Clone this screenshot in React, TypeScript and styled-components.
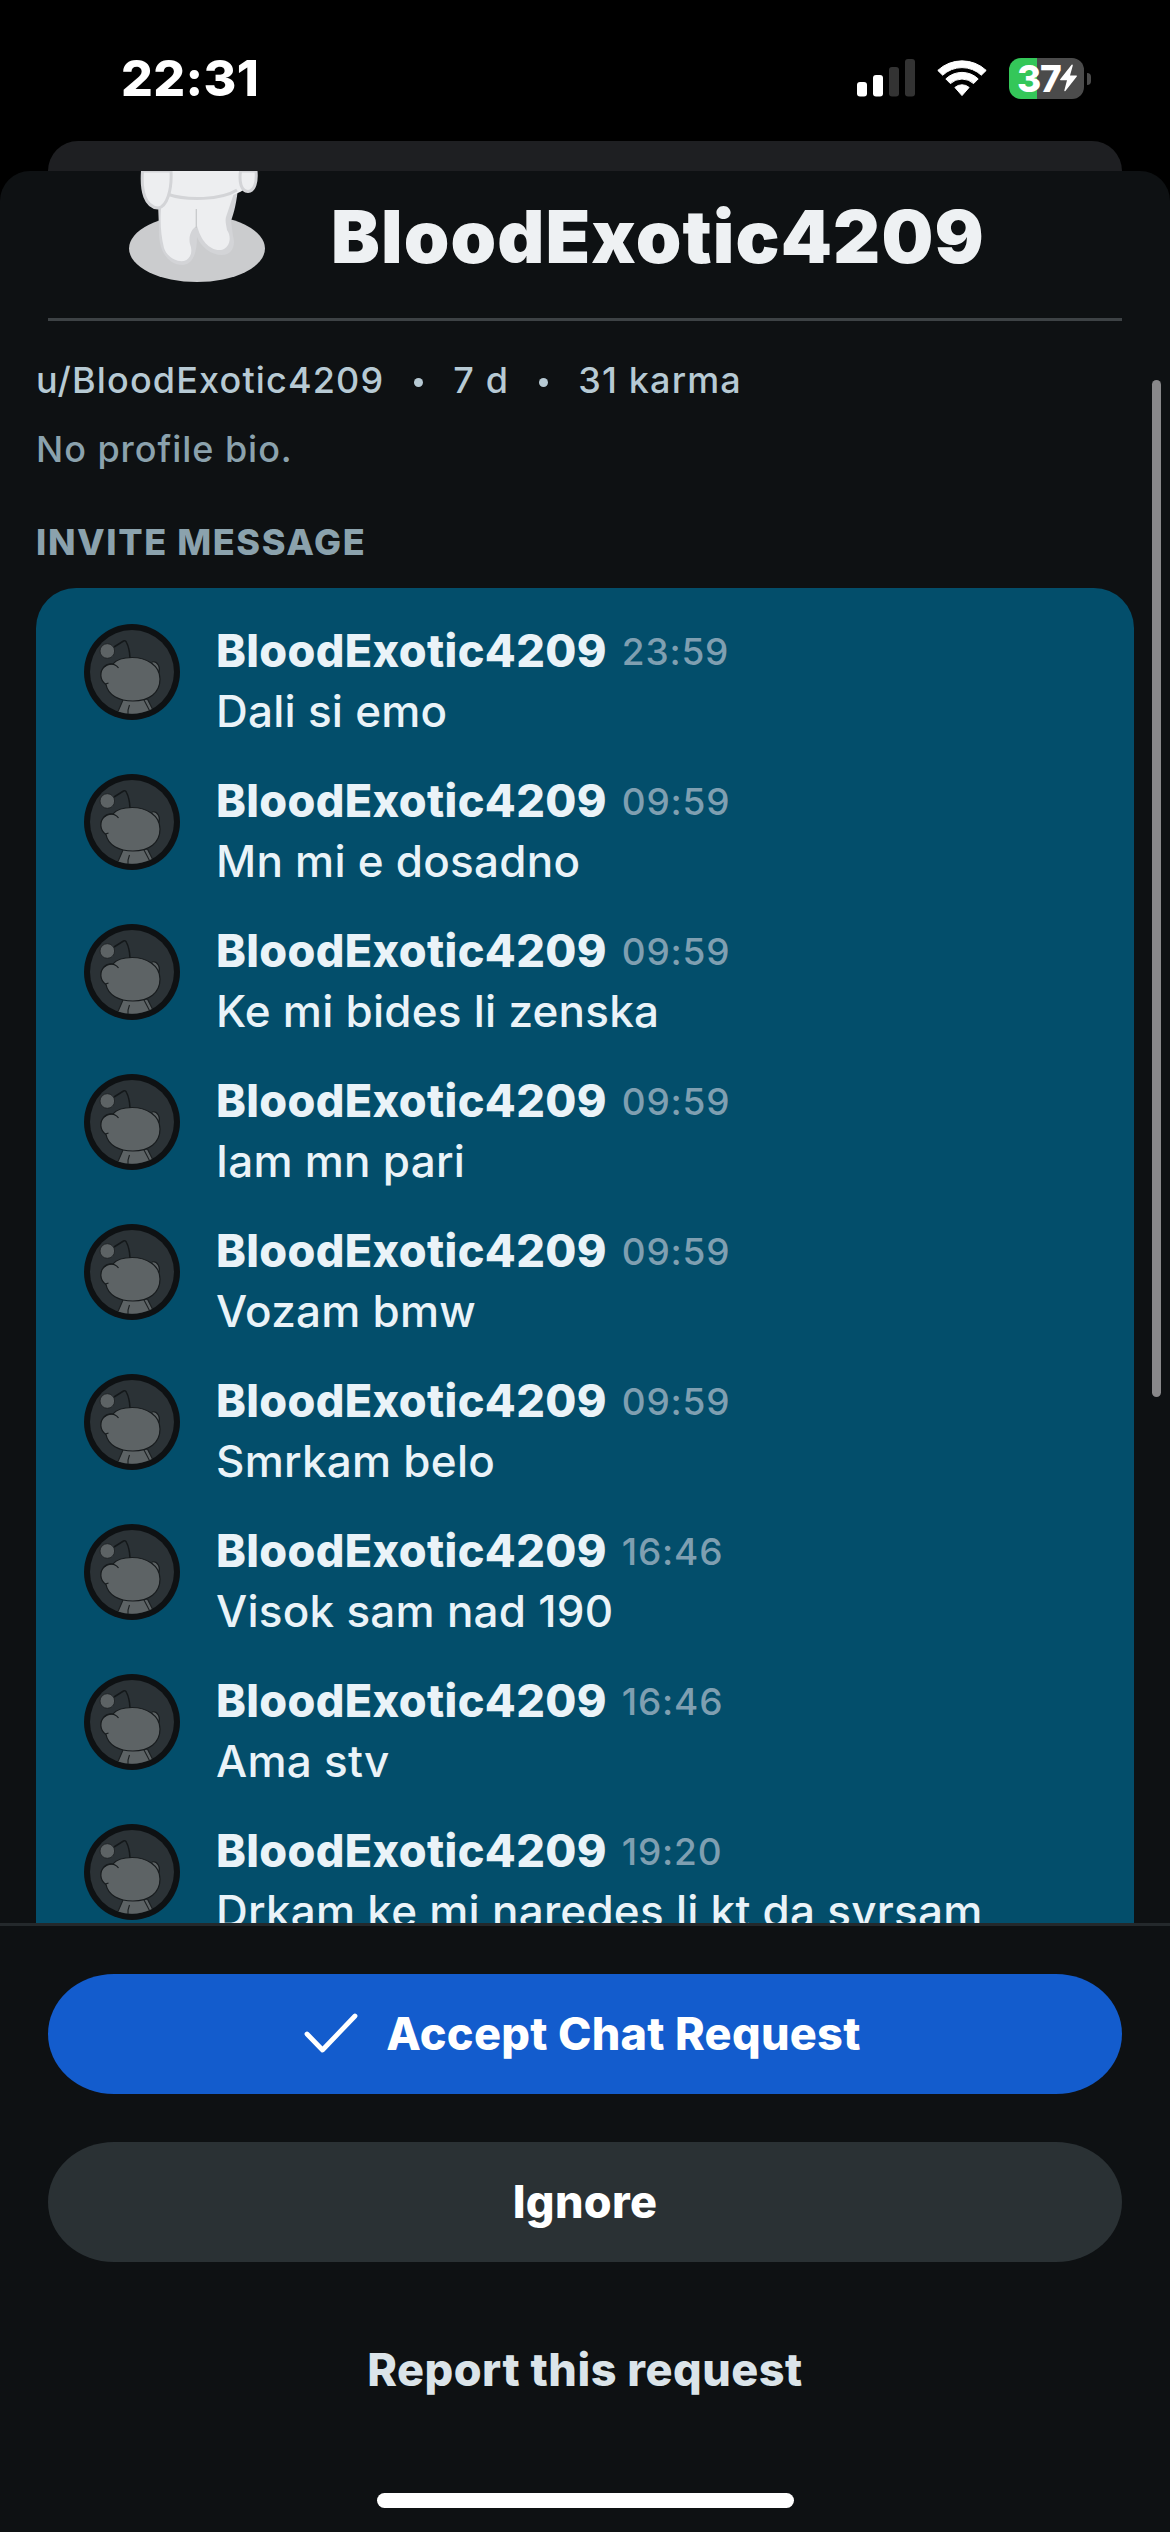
import React from "react";
import styled, { createGlobalStyle, css } from "styled-components";

const GlobalStyle = createGlobalStyle`
  *, *::before, *::after { box-sizing: border-box; }
  html, body { margin: 0; padding: 0; background: #000; }
  body { font-family: Inter, "Liberation Sans", sans-serif; -webkit-font-smoothing: antialiased; }
`;

const Screen = styled.div`
  width: 1170px;
  height: 2532px;
  display: flex;
  flex-direction: column;
  overflow: hidden;
  background: #000;
`;

const StatusBar = styled.div`
  height: 141px;
  flex: none;
  display: flex;
  align-items: flex-start;
  justify-content: space-between;
  padding: 48px 78px 0 121px;
`;

const Clock = styled.div`
  font-size: 50px;
  line-height: 60px;
  font-weight: 800;
  letter-spacing: 0.4px;
  color: #fff;
`;

const StatusIcons = styled.div`
  display: flex;
  align-items: center;
  height: 60px;
  gap: 22px;
`;

const BackSheet = styled.div`
  height: 30px;
  flex: none;
  margin: 0 48px;
  border-radius: 30px 30px 0 0;
  background: #1e1f22;
`;

const Sheet = styled.main`
  position: relative;
  flex: 1;
  display: flex;
  flex-direction: column;
  min-height: 0;
  border-radius: 30px 30px 0 0;
  background: #0e1113;
  overflow: hidden;
`;

const Header = styled.header`
  flex: none;
  height: 150px;
  margin: 0 48px;
  padding-left: 81px;
  display: flex;
  align-items: flex-start;
  border-bottom: 3px solid #3d4245;
`;

const Title = styled.h1`
  margin: 22px 0 0 66px;
  font-size: 73px;
  line-height: 87px;
  font-weight: 900;
  letter-spacing: 1.15px;
  color: #eef1f3;
`;

const Content = styled.section`
  flex: 1;
  min-height: 0;
  overflow: hidden;
  padding: 37px 36px 0;
`;

const Meta = styled.div`
  display: flex;
  align-items: center;
  height: 44px;
  font-size: 36px;
  line-height: 44px;
  font-weight: 500;
  letter-spacing: 1.15px;
  color: #b7cad4;
`;

const Dot = styled.i`
  width: 9px;
  height: 9px;
  margin: 4px 30px 0;
  border-radius: 50%;
  background: #b7cad4;
`;

const Bio = styled.p`
  margin: 25px 0 0;
  font-size: 36px;
  line-height: 44px;
  font-weight: 500;
  letter-spacing: 0.95px;
  color: #8ba2ad;
`;

const SectionLabel = styled.h2`
  margin: 49px 0 24px;
  font-size: 36px;
  line-height: 44px;
  font-weight: 800;
  letter-spacing: 1.6px;
  color: #8ba2ad;
`;

const Card = styled.div`
  display: flex;
  flex-direction: column;
  gap: 54px;
  padding: 36px 48px 60px;
  border-radius: 40px;
  background: #034e6b;
`;

const MessageRow = styled.article`
  display: flex;
  gap: 36px;
  height: 96px;
`;

const MessageBody = styled.div`
  margin-top: -3px;
  white-space: nowrap;
`;

const MessageHead = styled.div`
  display: flex;
  align-items: center;
  gap: 15px;
  height: 60px;
`;

const Author = styled.span`
  font-size: 45px;
  line-height: 60px;
  font-weight: 800;
  letter-spacing: 0.35px;
  color: #eaf3f8;
`;

const Time = styled.time`
  padding-top: 1px;
  font-size: 37px;
  line-height: 44px;
  font-weight: 500;
  letter-spacing: 0.8px;
  color: #7f9fb1;
`;

const MessageText = styled.p`
  margin: 0;
  font-size: 44px;
  line-height: 60px;
  font-weight: 500;
  letter-spacing: 0.25px;
  color: #eaf3f8;
`;

const ScrollThumb = styled.div`
  position: absolute;
  top: 209px;
  right: 9px;
  width: 9px;
  height: 1017px;
  border-radius: 5px;
  background: #88888a;
`;

const Footer = styled.footer`
  flex: none;
  height: 609px;
  display: flex;
  flex-direction: column;
  align-items: center;
  gap: 48px;
  padding: 48px 48px 0;
  border-top: 3px solid #24292c;
`;

const Button = styled.button<{ $tone: "primary" | "secondary" | "plain" }>`
  width: 100%;
  height: 120px;
  flex: none;
  display: flex;
  align-items: center;
  justify-content: center;
  gap: 28px;
  padding: 0;
  border: 0;
  border-radius: 66px / 60px;
  font: 800 45px/60px Inter, "Liberation Sans", sans-serif;
  letter-spacing: 0.3px;
  ${({ $tone }) =>
    $tone === "primary"
      ? css`padding-right: 5px; background: #135ccd; color: #fff;`
      : $tone === "secondary"
      ? css`background: #2a3134; color: #fff;`
      : css`background: transparent; color: #dbe4e9; letter-spacing: 0.5px;`}
`;

const HomeIndicator = styled.div`
  width: 417px;
  height: 15px;
  margin-top: 15px;
  border-radius: 8px;
  background: #fff;
`;

const Battery = styled.div`
  position: relative;
  width: 75px;
  height: 41px;
  display: flex;
  align-items: center;
  padding-left: 8px;
  border-radius: 12px;
  background: linear-gradient(to right, #34c759 28px, #4b4b4b 28px);
  color: #fff;
  font-size: 37px;
  line-height: 41px;
  font-weight: 800;
  letter-spacing: -1.3px;
  &::after {
    content: "";
    position: absolute;
    right: -7px;
    top: 15px;
    width: 4px;
    height: 12px;
    border-radius: 0 4px 4px 0;
    background: #4b4b4b;
  }
`;

const BatterySlot = styled.div`
  margin-right: 8px;
`;

const BoltSlot = styled.span`
  display: flex;
  margin-left: -1px;
`;

const Signal = () => (
  <svg width="58" height="38" viewBox="0 0 58 38">
    <rect x="0" y="23" width="10" height="14.5" rx="3" fill="#fff" />
    <rect x="16" y="16" width="10" height="21.5" rx="3" fill="#fff" />
    <rect x="32" y="8" width="10" height="29.5" rx="3" fill="#333" />
    <rect x="48" y="0" width="10" height="37.5" rx="3" fill="#333" />
  </svg>
);

const Wifi = () => (
  <svg width="50" height="38" viewBox="0 0 50 38" fill="#fff" stroke="#fff" strokeWidth="1" strokeLinejoin="round">
    <path d="M.8 11.4A35.5 35.5 0 0 1 49.2 11.4L44.3 16.2A28.3 28.3 0 0 0 5.7 16.2Z" />
    <path d="M8.8 19.9A23.4 23.4 0 0 1 41.2 19.9L36.6 24.6A17 17 0 0 0 13.4 24.6Z" />
    <path d="M17.9 28.4A11 11 0 0 1 32.1 28.4L25 36.6Z" />
  </svg>
);

const Bolt = () => (
  <svg width="19" height="28" viewBox="0 0 19 28">
    <path d="M12.6.8 1.2 15.2Q.5 16.3 1.8 16.3H8L5.3 26.4Q5.4 27.6 6.4 26.9L17.8 12.6Q18.4 11.5 17.2 11.5H11L13.8 1.6Q13.7.1 12.6.8Z" fill="#fff" />
  </svg>
);

const HeaderFigure = () => (
  <svg width="136" height="112" viewBox="0 0 136 112">
    <ellipse cx="68" cy="77.5" rx="68" ry="33.5" fill="#cbccce" />
    <path d="M29 32 L30 58 C29 75 36 94 54 94 C64 93 68 82 68 66 C72 76 82 84 93 84 C103 84 107 74 104 65 L102 50 C105 42 108 30 109 16Z" fill="#d3d4d7" />
    <path d="M36 18 L32 38 C31 52 32 65 35 77 C38 86 47 91 55 90 C62 88 64 80 61 73 C59 65 63 57 68 55 L69 58 C72 68 80 80 92 79 C101 77 103 66 98 59 C97 53 96 50 97 46 L107 16Z" fill="#edeef0" />
    <path d="M36 0H116V18C96 32 59 31 37 24Z" fill="#edeef0" />
    <path d="M38 23C58 30 92 29 108 19" fill="none" stroke="#d3d4d7" strokeWidth="3" />
    <path d="M67.300 38V57" fill="none" stroke="#c8c9cb" strokeWidth="1.300" />
    <path d="M13.500 0C12 20 16 36 29 37C38 36 43 19 42 0Z" fill="#edeef0" stroke="#d3d4d7" strokeWidth="3" />
    <path d="M111.500 0C110 11 112 20 119 20.500C126 20 128 10 127 0Z" fill="#edeef0" stroke="#d3d4d7" strokeWidth="3" />
  </svg>
);

const Avatar = () => (
  <svg width="96" height="96" viewBox="0 0 96 96">
    <circle cx="48" cy="48" r="48" fill="#0e1113" />
    <circle cx="48" cy="48" r="42" fill="#2b3236" />
    <path d="M68 38C73 36.500 77 43 74.500 49" fill="#5d6365" stroke="#171b1d" strokeWidth="1.200" />
    <path d="M39 76 L34 87.500 Q51 93 68 85 L63.500 76Z" fill="#5d6365" />
    <path d="M39 76 L34 87.500 M45.500 81Q43.500 86 44 90 M60 76L65.500 86.500 M63.500 75L68.500 85" fill="none" stroke="#1c2022" strokeWidth="1.100" />
    <path d="M29 40C33 35 41 33.500 48 33.500C62 33.500 76 41 76 55C76 69 65 77 49 77C35 77 24 71 22 60.500C15 56 16 47 20 43C22.500 40.500 26 39.500 29 40Z" fill="#5d6365" stroke="#171b1d" strokeWidth="1.200" />
    <path d="M20 43C24 39 31 39 34.500 44 M21.500 60L24.500 59" fill="none" stroke="#171b1d" strokeWidth="1.200" />
    <path d="M30 23 L39.500 17Q41.500 16 42.500 18.500Q45.500 24 46 34" fill="none" stroke="#14181a" strokeWidth="1.500" />
    <circle cx="23.300" cy="27" r="7.300" fill="#5d6365" stroke="#1c2022" strokeWidth=".8" />
  </svg>
);

const Check = () => (
  <svg width="54" height="42" viewBox="0 0 54 42" fill="none" stroke="#fff" strokeWidth="4.800" strokeLinecap="round" strokeLinejoin="round">
    <path d="M3 21 18.500 37 51 3" />
  </svg>
);

const messages = [
  { time: "23:59", text: "Dali si emo" },
  { time: "09:59", text: "Mn mi e dosadno" },
  { time: "09:59", text: "Ke mi bides li zenska" },
  { time: "09:59", text: "Iam mn pari" },
  { time: "09:59", text: "Vozam bmw" },
  { time: "09:59", text: "Smrkam belo" },
  { time: "16:46", text: "Visok sam nad 190" },
  { time: "16:46", text: "Ama stv" },
  { time: "19:20", text: "Drkam ke mi naredes li kt da svrsam" },
];

export default function App() {
  return (
    <Screen>
      <GlobalStyle />
      <StatusBar>
        <Clock>22:31</Clock>
        <StatusIcons>
          <Signal />
          <Wifi />
          <BatterySlot>
            <Battery>
              37
              <BoltSlot>
                <Bolt />
              </BoltSlot>
            </Battery>
          </BatterySlot>
        </StatusIcons>
      </StatusBar>
      <BackSheet />
      <Sheet>
        <Header>
          <HeaderFigure />
          <Title>BloodExotic4209</Title>
        </Header>
        <Content>
          <Meta>
            <span>u/BloodExotic4209</span>
            <Dot />
            <span>7 d</span>
            <Dot />
            <span>31 karma</span>
          </Meta>
          <Bio>No profile bio.</Bio>
          <SectionLabel>INVITE MESSAGE</SectionLabel>
          <Card>
            {messages.map((message, index) => (
              <MessageRow key={index}>
                <Avatar />
                <MessageBody>
                  <MessageHead>
                    <Author>BloodExotic4209</Author>
                    <Time>{message.time}</Time>
                  </MessageHead>
                  <MessageText>{message.text}</MessageText>
                </MessageBody>
              </MessageRow>
            ))}
          </Card>
        </Content>
        <Footer>
          <Button $tone="primary">
            <Check />
            Accept Chat Request
          </Button>
          <Button $tone="secondary">Ignore</Button>
          <Button $tone="plain">Report this request</Button>
          <HomeIndicator />
        </Footer>
        <ScrollThumb />
      </Sheet>
    </Screen>
  );
}
